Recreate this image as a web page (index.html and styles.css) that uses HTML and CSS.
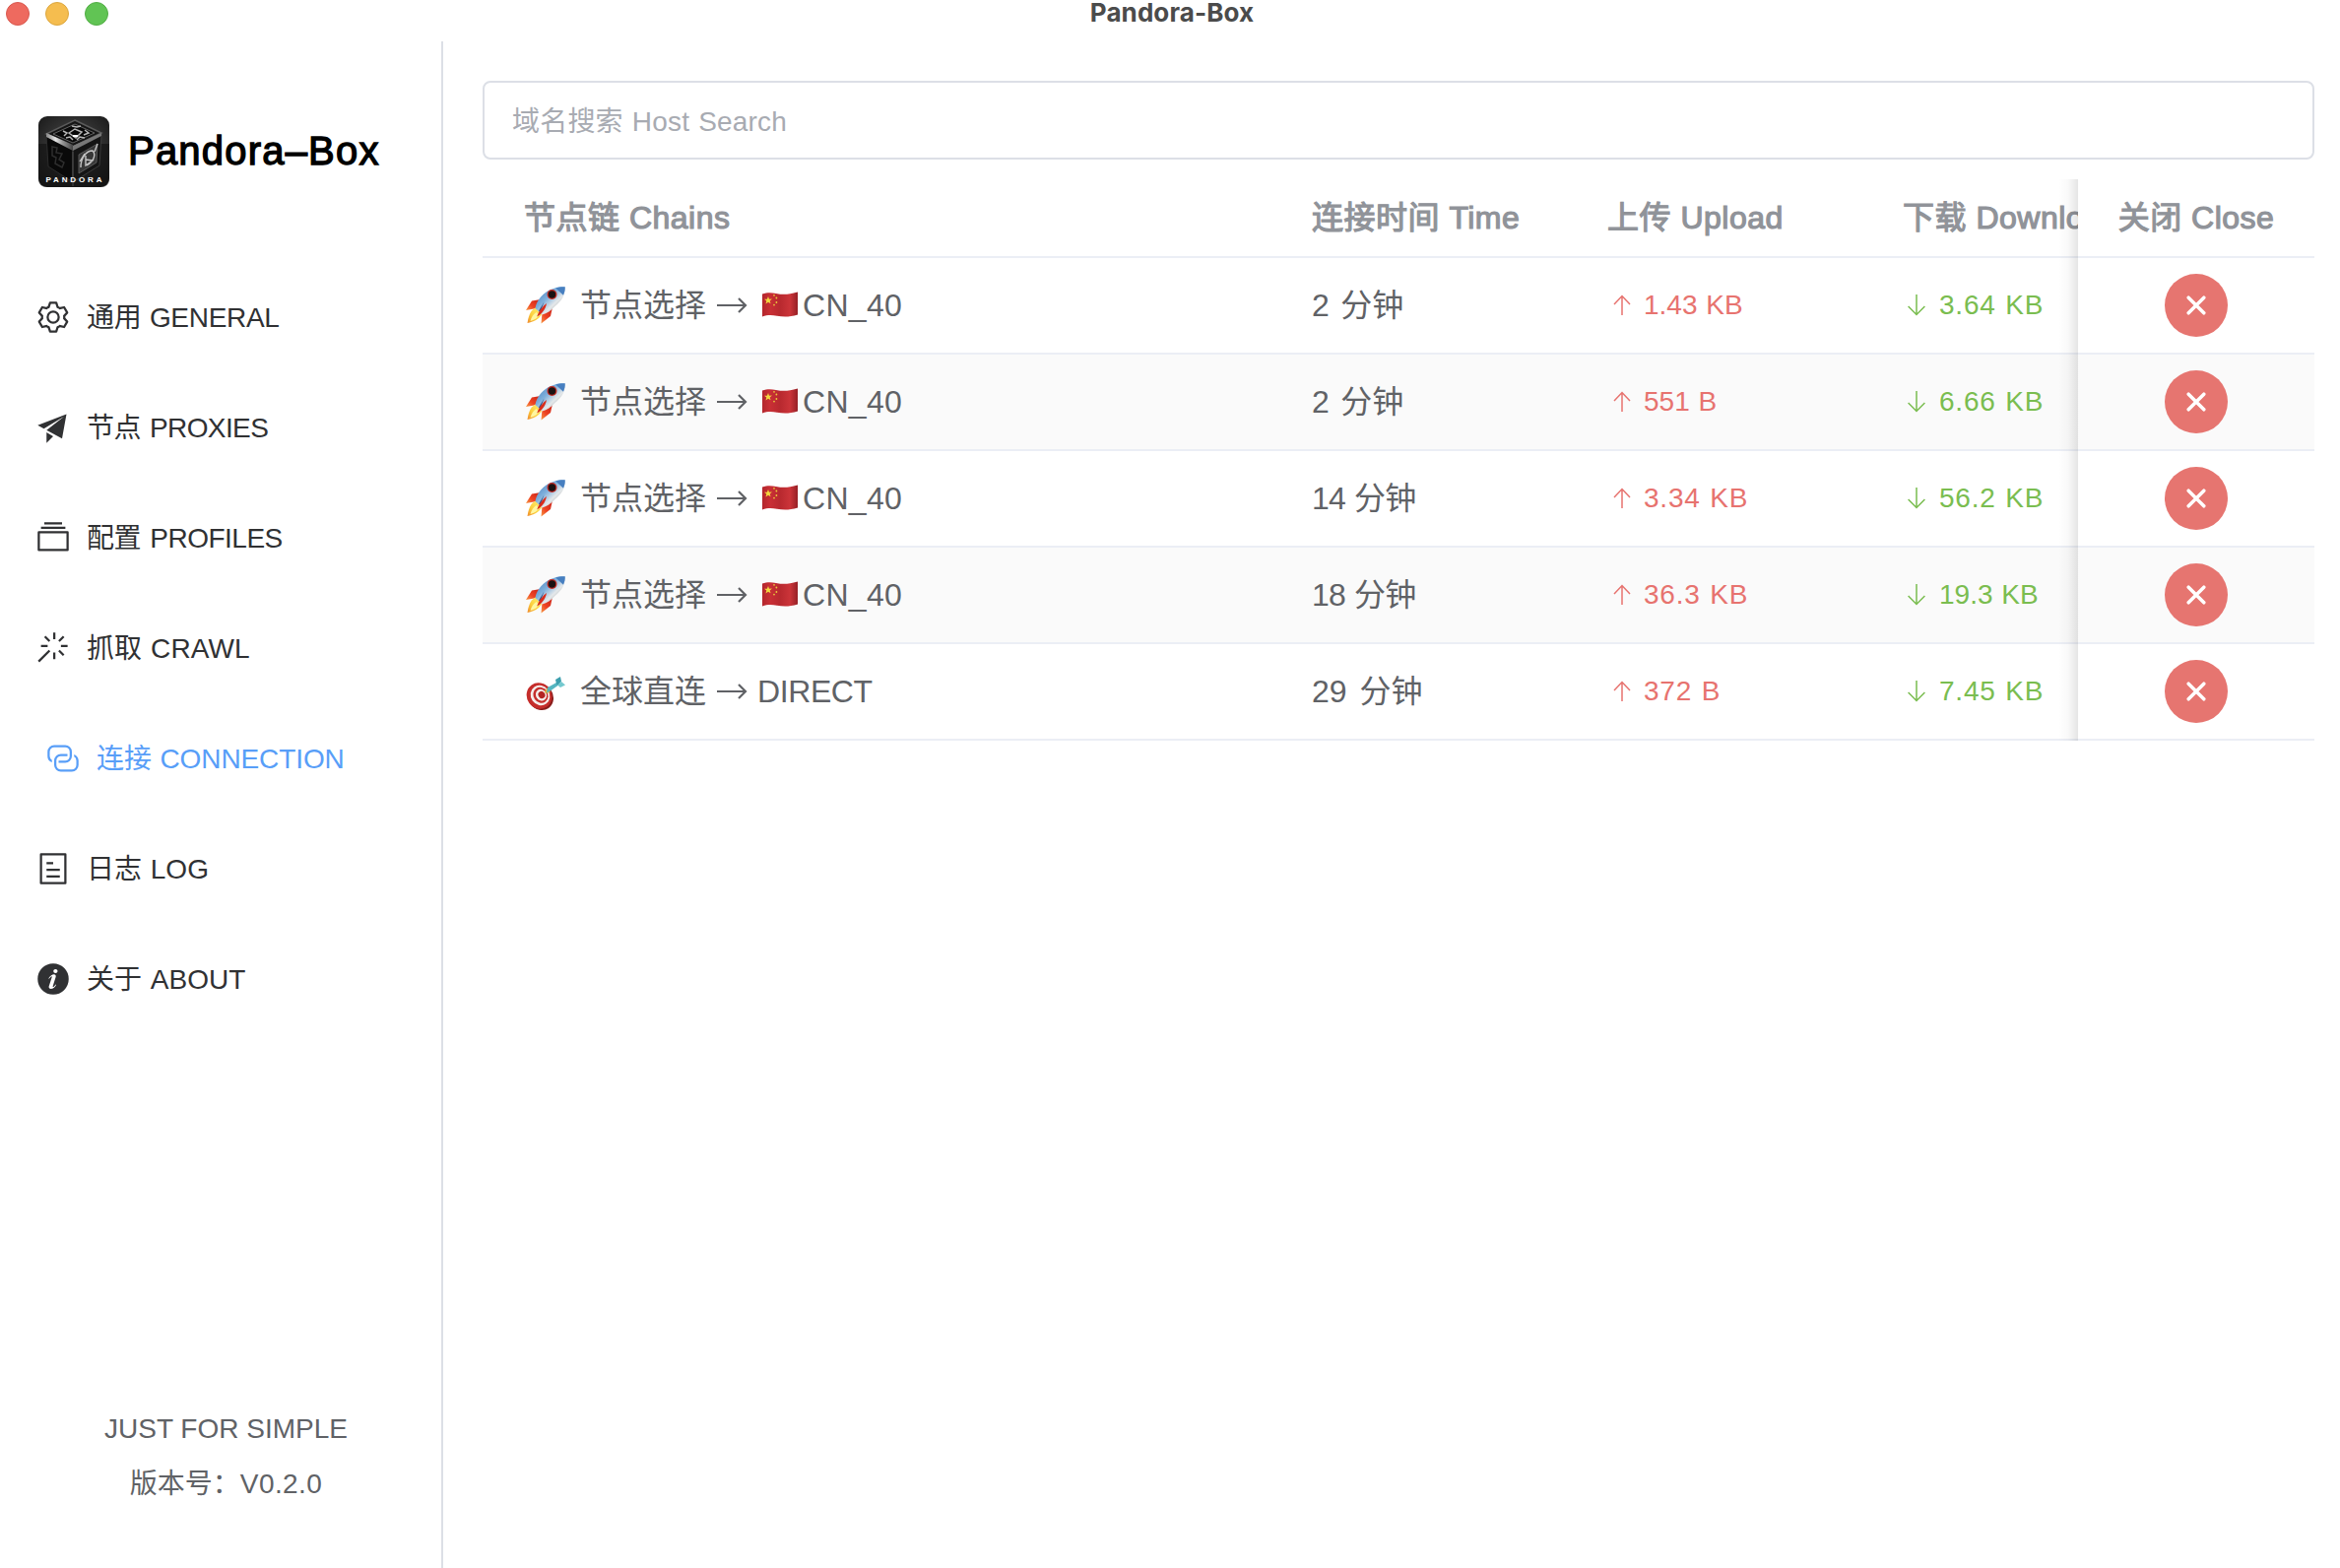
FILE: index.html
```html
<!DOCTYPE html>
<html lang="zh-CN">
<head>
<meta charset="utf-8">
<title>Pandora-Box</title>
<link rel="stylesheet" href="styles.css">
</head>
<body>
<svg class="defs" width="0" height="0" aria-hidden="true">
  <defs>
    <linearGradient id="hull" x1="0" y1="0" x2="1" y2="1">
      <stop offset="0" stop-color="#3f78b8"/><stop offset=".4" stop-color="#7fb0dc"/><stop offset=".62" stop-color="#e4e8ea"/><stop offset="1" stop-color="#85898c"/>
    </linearGradient>
    <linearGradient id="fire" x1="1" y1="0" x2="0" y2="1">
      <stop offset="0" stop-color="#fff27a"/><stop offset=".6" stop-color="#fbd03c"/><stop offset="1" stop-color="#f08a2c"/>
    </linearGradient>
    <linearGradient id="fin" x1="1" y1="0" x2="0" y2="1">
      <stop offset="0" stop-color="#c81f16"/><stop offset=".6" stop-color="#ee4423"/><stop offset="1" stop-color="#f79a45"/>
    </linearGradient>
    <linearGradient id="cloth" x1="0" y1="0" x2="1" y2="0">
      <stop offset="0" stop-color="#b3262c"/><stop offset=".22" stop-color="#c92f35"/><stop offset=".5" stop-color="#b8292f"/><stop offset=".78" stop-color="#cb3439"/><stop offset="1" stop-color="#962026"/>
    </linearGradient>
    <symbol id="rocket" viewBox="0 0 40 38">
      <path d="M15 13 6 14.500 0 24l11-2z" fill="url(#fin)"/>
      <path d="m27 21-2 9-9.500 7.500 1-11z" fill="url(#fin)"/>
      <path d="M11 21c-5 2-8 6-9.500 16 6-1 12-4 15-9.500z" fill="url(#fire)"/>
      <path d="M10.500 26c-3 2-5 5-6 9 4-1 7-3 9-6z" fill="#fff6a0"/>
      <path d="M39.700.3C31-.3 22 3 15.500 10c-3.500 4-5.500 8-6 12l7 6.500c5-1.500 9-4 13-8.500C37 14 40.500 7 39.700.3z" fill="url(#hull)"/>
      <path d="M39.700.3c-3.500-.2-6.500.1-9.500 1.200l7.800 7.300c1.400-3 1.900-5.800 1.700-8.500z" fill="#477fc0"/>
      <path d="M18.500 15.500 13 24.500l1.500 1.800z" fill="#34558a"/>
      <path d="M21 17c-4 3-8 8-9.800 13.500C16 28 20 23 21 17z" fill="#d92c1b"/>
      <circle cx="26.500" cy="8" r="5" fill="#c22a22"/><circle cx="26.500" cy="8" r="3.700" fill="#1a1213"/>
    </symbol>
    <symbol id="target" viewBox="0 0 40 35">
      <ellipse cx="15" cy="20.500" rx="12.500" ry="14" fill="#8a1d1c" transform="rotate(-35 15 20.500)"/>
      <ellipse cx="13.500" cy="19.500" rx="12.500" ry="13.500" fill="#c52d2b" transform="rotate(-35 13.500 19.500)"/>
      <ellipse cx="14.500" cy="19" rx="9.500" ry="10.500" fill="#f5eeec" transform="rotate(-35 14.500 19)"/>
      <ellipse cx="15" cy="18.800" rx="7.300" ry="8.200" fill="#c62f2c" transform="rotate(-35 15 18.800)"/>
      <ellipse cx="15.500" cy="18.600" rx="5.300" ry="6" fill="#f5eeec" transform="rotate(-35 15.500 18.600)"/>
      <ellipse cx="16" cy="18.500" rx="3.300" ry="3.800" fill="#b42523" transform="rotate(-35 16 18.500)"/>
      <path d="m19.500 14 3.500-3.500 1.500 5.500-5 1z" fill="#e0b63a"/>
      <path d="M21 16.500 22 11l10-5.500 2 2.500-10 7z" fill="#55b5c0"/>
      <path d="M31 7.500 30 3 35 0l1 4.800L32.500 9z" fill="#3d9fae"/>
      <path d="m32 8.500 4-3.500 4 3.500-5 2.500z" fill="#74c9cf"/>
    </symbol>
    <symbol id="flag" viewBox="0 0 36 26">
      <path d="M0 2.500C5 .8 9 1 14 1.900c7 1.300 12 1.400 22-1.400v23c-9 2.700-15 2.200-21 1.200C9 23.600 5 23.700 0 25.500z" fill="url(#cloth)"/>
      <path d="m6 5 1 2.700 2.900-.1-2.200 1.900.8 2.800L6 10.800l-2.500 1.600.8-2.800L2 7.800l2.900-.1z" fill="#f3d83f"/>
      <g fill="#e9c93c"><circle cx="12" cy="3.800" r=".9"/><circle cx="14.400" cy="6.500" r=".9"/><circle cx="14.400" cy="11" r=".9"/><circle cx="12" cy="13.600" r=".9"/></g>
    </symbol>
    <symbol id="right" viewBox="0 0 32 16"><path d="M1 8h29M23 1l7 7-7 7" fill="none" stroke="currentColor" stroke-width="2.200"/></symbol>
    <symbol id="up" viewBox="0 0 18 22"><path d="M9 21V1.500M1 10l8-8.500L17 10" fill="none" stroke="currentColor" stroke-width="1.500"/></symbol>
    <symbol id="down" viewBox="0 0 18 22"><path d="M9 0v20.500M.6 12 9 20.500 17.400 12" fill="none" stroke="currentColor" stroke-width="1.500"/></symbol>
    <symbol id="cross" viewBox="0 0 20 20"><path d="m2.200 2.200 15.600 15.600M17.800 2.200 2.200 17.800" fill="none" stroke="currentColor" stroke-width="3.500" stroke-linecap="round"/></symbol>
  </defs>
</svg>

<header class="titlebar">
  <div class="lights"><i class="light red"></i><i class="light yellow"></i><i class="light green"></i></div>
  <div class="window-title">Pandora-Box</div>
</header>

<div class="app">
  <aside class="sidebar">
    <div class="brand">
      <svg class="logo" viewBox="0 0 72 72">
        <defs>
          <radialGradient id="bg" cx=".5" cy=".45" r=".7"><stop offset="0" stop-color="#555"/><stop offset=".55" stop-color="#303030"/><stop offset="1" stop-color="#171717"/></radialGradient>
          <linearGradient id="rim" x1="0" y1="0" x2="1" y2="0"><stop offset="0" stop-color="#888"/><stop offset=".35" stop-color="#e4e4e4"/><stop offset=".6" stop-color="#999"/><stop offset="1" stop-color="#444"/></linearGradient>
        </defs>
        <rect width="72" height="72" rx="9" fill="url(#bg)"/>
        <path d="M0 28h72v35c0 6-3 9-9 9H9c-6 0-9-3-9-9z" fill="#111" opacity=".65"/>
        <path d="M8 18 35 31v36L10 51z" fill="#090909" stroke="#2c2c2c"/>
        <path d="M35 31 64 18l-2 32-27 17z" fill="#141414" stroke="#3a3a3a"/>
        <path d="M37 4 64 17 35 31 8 18z" fill="#151515" stroke="#5a5a5a" stroke-width="1.500"/>
        <path d="M37 8 57 17 35 27 15 18z" fill="#080808" stroke="#777" stroke-width=".8"/>
        <path d="m8 17 27 12v6L8 21z" fill="url(#rim)"/>
        <path d="m35 30 29-13v3L35 35z" fill="#777"/>
        <path d="m31 17 6-4 7 3-6 6zM25 15l4 2-3 3M34 10l5 1 4-1M47 14l4 3-5 2M28 22l4-1 3 3M39 24l3-3 5 1" fill="none" stroke="#b5b5b5" stroke-width="1.500"/>
        <path d="M35 20h5" stroke="#fff" stroke-width="2"/>
        <path d="M14 31l5 1-1 5 6 1-3 6 5 3-2 5-7-4 1-6-4-2z" fill="none" stroke="#2e2e2e" stroke-width="1.500"/>
        <path d="M41 39 60 28l-1 19-18 11z" fill="#383838" stroke="#666" stroke-width=".8"/>
        <path d="M43 52c0-9 5-17 12-17 4 4 1 11-6 15M48 40v10l7-5-7-1M42 46l5-8M60 28l-3 8" fill="none" stroke="#c5c5c5" stroke-width="1.400"/>
        <path d="M35 36v35" stroke="#4a4a4a"/>
        <text x="7.500" y="66.500" class="logo-text" textLength="57">PANDORA</text>
      </svg>
      <span class="brand-name">Pandora–Box</span>
    </div>

    <nav class="menu">
      <a class="item"><svg class="icon" viewBox="0 0 1024 1024"><path d="M600.704 64a32 32 0 0 1 30.464 22.208l35.200 109.376c14.784 7.232 28.928 15.360 42.432 24.512l112.384-24.192a32 32 0 0 1 34.432 15.360L944.320 364.800a32 32 0 0 1-4.032 37.504l-77.120 85.120a357.120 357.120 0 0 1 0 49.024l77.120 85.248a32 32 0 0 1 4.032 37.504l-88.704 153.600a32 32 0 0 1-34.432 15.296L708.800 803.904c-13.440 9.088-27.648 17.280-42.368 24.512l-35.264 109.376A32 32 0 0 1 600.704 960H423.296a32 32 0 0 1-30.464-22.208L357.696 828.480a351.616 351.616 0 0 1-42.560-24.640l-112.320 24.256a32 32 0 0 1-34.432-15.360L79.680 659.200a32 32 0 0 1 4.032-37.504l77.120-85.248a357.120 357.120 0 0 1 0-48.896l-77.120-85.248A32 32 0 0 1 79.680 364.800l88.704-153.600a32 32 0 0 1 34.432-15.296l112.320 24.256c13.568-9.152 27.776-17.408 42.560-24.640l35.200-109.312A32 32 0 0 1 423.232 64H600.640zm-23.424 64H446.720l-36.352 113.088-24.512 11.968a294.113 294.113 0 0 0-34.816 20.096l-22.656 15.360-116.224-25.088-65.280 113.152 79.680 88.192-1.920 27.136a293.120 293.120 0 0 0 0 40.192l1.920 27.136-79.808 88.192 65.344 113.152 116.224-25.024 22.656 15.296a294.113 294.113 0 0 0 34.816 20.096l24.512 11.968L446.720 896h130.688l36.480-113.152 24.448-11.904a288.282 288.282 0 0 0 34.752-20.096l22.592-15.296 116.288 25.024 65.280-113.152-79.744-88.192 1.920-27.136a293.120 293.120 0 0 0 0-40.256l-1.920-27.136 79.808-88.128-65.344-113.152-116.288 24.960-22.592-15.232a287.616 287.616 0 0 0-34.752-20.096l-24.448-11.904L577.344 128zM512 320a192 192 0 1 1 0 384 192 192 0 0 1 0-384m0 64a128 128 0 1 0 0 256 128 128 0 0 0 0-256"/></svg><span class="label t-general">通用 GENERAL</span></a>
      <a class="item"><svg class="icon" viewBox="0 0 1024 1024"><path d="m64 448 832-320-128 704-446.080-243.328L832 192 242.816 545.472zm256 512V657.024L512 768z"/></svg><span class="label t-proxies">节点 PROXIES</span></a>
      <a class="item"><svg class="icon" viewBox="0 0 1024 1024"><path d="M128 384v448h768V384zm-32-64h832a32 32 0 0 1 32 32v512a32 32 0 0 1-32 32H96a32 32 0 0 1-32-32V352a32 32 0 0 1 32-32m64-128h704v64H160zm96-128h512v64H256z"/></svg><span class="label t-profiles">配置 PROFILES</span></a>
      <a class="item"><svg class="icon" viewBox="0 0 1024 1024"><path d="M512 64h64v192h-64zm0 576h64v192h-64zM160 480v-64h192v64zm576 0v-64h192v64zM249.856 199.040l45.248-45.184L430.848 289.600 385.600 334.848 249.856 199.104zM657.152 606.400l45.248-45.248 135.744 135.744-45.248 45.248zM114.048 923.200 68.800 877.952l316.800-316.800 45.248 45.248zM702.400 334.848 657.152 289.600l135.744-135.744 45.248 45.248z"/></svg><span class="label t-crawl">抓取 CRAWL</span></a>
      <a class="item active"><svg class="icon" viewBox="0 0 1024 1024"><path d="M640 384v64H448a128 128 0 0 0-128 128v128a128 128 0 0 0 128 128h320a128 128 0 0 0 128-128V576a128 128 0 0 0-64-110.848V394.880c74.560 26.368 128 97.472 128 181.056v128a192 192 0 0 1-192 192H448a192 192 0 0 1-192-192V576a192 192 0 0 1 192-192z"/><path d="M384 640v-64h192a128 128 0 0 0 128-128V320a128 128 0 0 0-128-128H256a128 128 0 0 0-128 128v128a128 128 0 0 0 64 110.848v70.272A192.064 192.064 0 0 1 64 448V320a192 192 0 0 1 192-192h320a192 192 0 0 1 192 192v128a192 192 0 0 1-192 192z"/></svg><span class="label t-connection">连接 CONNECTION</span></a>
      <a class="item"><svg class="icon" viewBox="0 0 1024 1024"><path d="M192 128v768h640V128zm-32-64h704a32 32 0 0 1 32 32v832a32 32 0 0 1-32 32H160a32 32 0 0 1-32-32V96a32 32 0 0 1 32-32m160 448h384v64H320zm0-192h192v64H320zm0 384h384v64H320z"/></svg><span class="label">日志 LOG</span></a>
      <a class="item"><svg class="icon" viewBox="0 0 1024 1024"><path d="M512 64a448 448 0 1 1 0 896.064A448 448 0 0 1 512 64m67.200 275.072c33.280 0 60.288-23.104 60.288-57.344s-27.072-57.344-60.288-57.344c-33.280 0-60.160 23.104-60.160 57.344s26.880 57.344 60.160 57.344M590.912 699.200c0-6.848 2.368-24.640 1.024-34.752l-52.608 60.544c-10.880 11.456-24.512 19.392-30.912 17.280a12.992 12.992 0 0 1-8.256-14.720l87.680-276.992c7.168-35.136-12.544-67.200-54.336-71.296-44.096 0-108.992 44.736-148.480 101.504 0 6.784-1.280 23.680.064 33.792l52.544-60.608c10.880-11.328 23.552-19.328 29.952-17.152a12.800 12.800 0 0 1 7.808 16.128L388.480 728.576c-10.048 32.256 8.960 63.872 55.040 71.040 67.840 0 107.904-43.648 147.456-100.416z"/></svg><span class="label">关于 ABOUT</span></a>
    </nav>

    <footer class="version">
      <div class="slogan">JUST FOR SIMPLE</div>
      <div>版本号：<span class="number">V0.2.0</span></div>
    </footer>
  </aside>

  <main class="main">
    <div class="search">域名搜索 Host Search</div>
    <div class="table">
      <div class="row head">
        <div class="cell">节点链 Chains</div><div class="cell">连接时间 Time</div><div class="cell">上传 Upload</div><div class="cell">下载 Download</div><div class="cell close">关闭 Close</div>
      </div>
      <div class="row">
        <div class="cell"><svg class="emoji rocket"><use href="#rocket"/></svg><span>节点选择</span><svg class="right"><use href="#right"/></svg><svg class="flag"><use href="#flag"/></svg><span class="node">CN_40</span></div>
        <div class="cell time">2 分钟</div>
        <div class="cell rate up"><svg class="arrow"><use href="#up"/></svg><span class="one">1.43 KB</span></div>
        <div class="cell rate down"><svg class="arrow"><use href="#down"/></svg><span>3.64 KB</span></div>
        <div class="cell close"><span class="button"><svg><use href="#cross"/></svg></span></div>
      </div>
      <div class="row striped">
        <div class="cell"><svg class="emoji rocket"><use href="#rocket"/></svg><span>节点选择</span><svg class="right"><use href="#right"/></svg><svg class="flag"><use href="#flag"/></svg><span class="node">CN_40</span></div>
        <div class="cell time">2 分钟</div>
        <div class="cell rate up"><svg class="arrow"><use href="#up"/></svg><span class="one">551 B</span></div>
        <div class="cell rate down"><svg class="arrow"><use href="#down"/></svg><span>6.66 KB</span></div>
        <div class="cell close"><span class="button"><svg><use href="#cross"/></svg></span></div>
      </div>
      <div class="row">
        <div class="cell"><svg class="emoji rocket"><use href="#rocket"/></svg><span>节点选择</span><svg class="right"><use href="#right"/></svg><svg class="flag"><use href="#flag"/></svg><span class="node">CN_40</span></div>
        <div class="cell time tight">14 分钟</div>
        <div class="cell rate up"><svg class="arrow"><use href="#up"/></svg><span>3.34 KB</span></div>
        <div class="cell rate down"><svg class="arrow"><use href="#down"/></svg><span>56.2 KB</span></div>
        <div class="cell close"><span class="button"><svg><use href="#cross"/></svg></span></div>
      </div>
      <div class="row striped">
        <div class="cell"><svg class="emoji rocket"><use href="#rocket"/></svg><span>节点选择</span><svg class="right"><use href="#right"/></svg><svg class="flag"><use href="#flag"/></svg><span class="node">CN_40</span></div>
        <div class="cell time tight">18 分钟</div>
        <div class="cell rate up"><svg class="arrow"><use href="#up"/></svg><span>36.3 KB</span></div>
        <div class="cell rate down"><svg class="arrow"><use href="#down"/></svg><span class="one">19.3 KB</span></div>
        <div class="cell close"><span class="button"><svg><use href="#cross"/></svg></span></div>
      </div>
      <div class="row">
        <div class="cell"><svg class="emoji target"><use href="#target"/></svg><span>全球直连</span><svg class="right"><use href="#right"/></svg><span class="direct">DIRECT</span></div>
        <div class="cell time wide">29 分钟</div>
        <div class="cell rate up"><svg class="arrow"><use href="#up"/></svg><span>372 B</span></div>
        <div class="cell rate down"><svg class="arrow"><use href="#down"/></svg><span>7.45 KB</span></div>
        <div class="cell close"><span class="button"><svg><use href="#cross"/></svg></span></div>
      </div>
    </div>
  </main>
</div>
</body>
</html>
```
FILE: styles.css
```css
* { box-sizing: border-box; }
body {
  margin: 0;
  height: 1592px;
  display: flex;
  flex-direction: column;
  overflow: hidden;
  background: #fff;
  color: #606266;
  font-family: "Liberation Sans", "Noto Sans CJK SC", sans-serif;
  font-size: 28px;
  white-space: nowrap;
}
svg { display: block; flex: none; }
.defs { position: absolute; }

.titlebar {
  height: 42px;
  flex: none;
  display: grid;
  grid-template-columns: 300px 1780px 296px;
  align-items: start;
}
.lights { display: flex; gap: 16px; padding: 2px 6px; }
.light { width: 24px; height: 24px; border-radius: 50%; }
.red { background: #ee6a5f; border: 1px solid #d9594f; }
.yellow { background: #f5bd4f; border: 1px solid #dca73f; }
.green { background: #61c454; border: 1px solid #52ae45; }
.window-title {
  text-align: center;
  font: 700 26px/26px Inter, sans-serif;
  letter-spacing: 0.1px;
  color: #4b4b4b;
}

.app { flex: 1; display: flex; min-height: 0; }
.sidebar {
  width: 450px;
  flex: none;
  display: flex;
  flex-direction: column;
  border-right: 2px solid #dcdfe6;
}
.brand {
  display: flex;
  align-items: center;
  gap: 19px;
  padding: 76px 0 0 39px;
}
.logo { width: 72px; height: 72px; }
.logo-text { font: 700 8px "Liberation Sans", sans-serif; fill: #fff; }
.brand-name {
  font-size: 40px;
  line-height: 70px;
  margin-bottom: 2px;
  letter-spacing: 1.2px;
  color: #000;
  -webkit-text-stroke: 1.3px #000;
}
.menu { padding: 76px 0 0 36px; }
.item {
  height: 112px;
  display: flex;
  align-items: center;
  gap: 16px;
  color: #303133;
}
.item.active { padding-left: 10px; color: #589ef8; }
.icon { width: 36px; height: 36px; fill: currentColor; }
.label { line-height: 36px; padding-top: 1px; word-spacing: 1px; }
.t-general { letter-spacing: -0.3px; }
.t-proxies { letter-spacing: -0.6px; word-spacing: 2px; }
.t-profiles { letter-spacing: -0.5px; word-spacing: 2px; }
.t-crawl { letter-spacing: 0.1px; }
.t-connection { letter-spacing: -0.1px; }
.version {
  margin-top: auto;
  padding: 0 0 57px 11px;
  text-align: center;
  line-height: 56px;
}
.number { letter-spacing: 0.4px; }

.main { flex: 1; padding: 40px 26px 0 40px; }
.search {
  height: 80px;
  padding-left: 28px;
  border: 2px solid #dcdfe6;
  border-radius: 8px;
  line-height: 79px;
  color: #a8abb2;
  word-spacing: 1px;
  letter-spacing: 0.2px;
}
.table { position: relative; margin-top: 20px; font-size: 32px; }
.table::after {
  content: "";
  position: absolute;
  top: 0;
  bottom: 0;
  right: 240px;
  width: 20px;
  background: linear-gradient(to right, rgba(0,0,0,0), rgba(0,0,0,.025) 50%, rgba(0,0,0,.1));
}
.row {
  height: 98px;
  display: grid;
  grid-template-columns: 800px 300px 300px 220px 240px;
  border-bottom: 2px solid #ebeef5;
}
.striped { background: #fafafa; }
.head {
  height: 80px;
  color: #909399;
  letter-spacing: 0.5px;
  -webkit-text-stroke: 1.2px #909399;
}
.cell {
  display: flex;
  align-items: center;
  padding-left: 42px;
  overflow: hidden;
  line-height: 40px;
}
.close { padding-left: 0; justify-content: center; }
.emoji { width: 40px; margin: 0 15px 0 2px; }
.rocket { height: 38px; }
.target { height: 35px; margin-top: 4px; }
.right { width: 32px; height: 16px; margin: 0 0 1px 10px; }
.flag { width: 36px; height: 26px; margin: 0 5px 2px 15px; }
.node { letter-spacing: 0.3px; }
.direct { margin-left: 10px; letter-spacing: -0.4px; }
.time { word-spacing: 2.5px; }
.time.tight { word-spacing: 1px; letter-spacing: -0.8px; }
.time.wide { word-spacing: 4px; }
.rate { font-size: 28px; }
.up { color: #e7736f; }
.down { color: #7abd50; }
.up .arrow { width: 18px; height: 22px; margin: 0 13px 0 6px; }
.down .arrow { width: 18px; height: 22px; margin: 0 14px 0 5px; }
.rate span { letter-spacing: 0.8px; word-spacing: 1px; }
.rate .one { letter-spacing: 0; }
.button {
  width: 64px;
  height: 64px;
  border-radius: 50%;
  display: flex;
  align-items: center;
  justify-content: center;
  background: #e67570;
  color: #fff;
}
.button svg { width: 20px; height: 20px; }
```
